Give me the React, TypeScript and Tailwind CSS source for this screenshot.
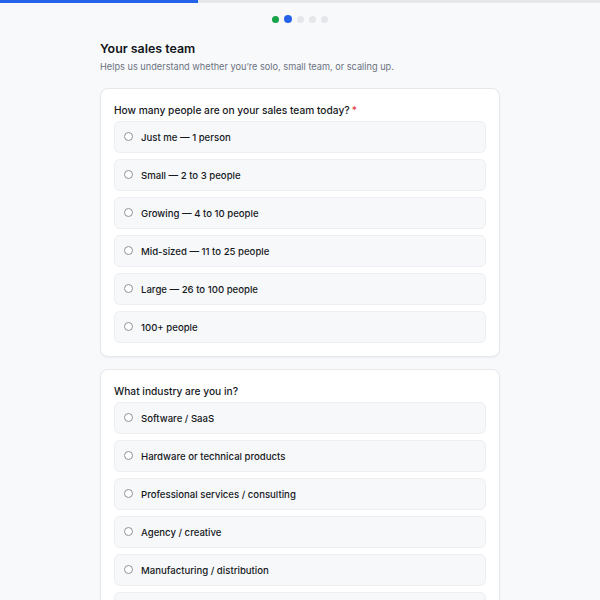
const teamSizes = [
  "Just me — 1 person",
  "Small — 2 to 3 people",
  "Growing — 4 to 10 people",
  "Mid-sized — 11 to 25 people",
  "Large — 26 to 100 people",
  "100+ people",
];

const industries = [
  "Software / SaaS",
  "Hardware or technical products",
  "Professional services / consulting",
  "Agency / creative",
  "Manufacturing / distribution",
  "Other",
];

function Option({ label }: { label: string }) {
  return (
    <label className="flex items-start gap-[8px] h-[32px] pl-[9px] pt-[10px] rounded-md border border-[#eceef1] bg-[#f7f8fa]">
      <span className="h-[9px] w-[9px] shrink-0 rounded-full border border-[#8e939b] bg-white"></span>
      <span className="text-[9.6px] leading-[12px] font-medium text-[#16191d]">{label}</span>
    </label>
  );
}

function Question({ title, required, options }: { title: string; required?: boolean; options: string[] }) {
  return (
    <div className="rounded-lg border border-[#e6e8ec] bg-white px-[13px] pt-[13px] pb-[13px] shadow-[0_1px_2px_rgba(16,24,40,0.05)]">
      <p className="text-[10.2px] leading-[16px] font-medium text-[#16191d] mb-[3px]">
        {title}
        {required && <span className="text-[#e5484d] ml-[2px]">*</span>}
      </p>
      <div className="flex flex-col gap-[6px]">
        {options.map((o) => (
          <Option key={o} label={o} />
        ))}
      </div>
    </div>
  );
}

export default function App() {
  return (
    <div className="bg-[#f8f9fb] font-['Inter',sans-serif] overflow-hidden h-[600px]">
      {/* progress */}
      <div className="h-[3px] bg-[#e5e7eb]">
        <div className="h-full w-[198px] bg-[#2563eb]"></div>
      </div>

      <div className="flex items-center justify-center gap-[5px] mt-[12px]">
        <span className="h-[7px] w-[7px] rounded-full bg-[#16a34a]"></span>
        <span className="h-[8px] w-[8px] rounded-full bg-[#2563eb]"></span>
        <span className="h-[7px] w-[7px] rounded-full bg-[#e5e7eb]"></span>
        <span className="h-[7px] w-[7px] rounded-full bg-[#e5e7eb]"></span>
        <span className="h-[7px] w-[7px] rounded-full bg-[#e5e7eb]"></span>
      </div>

      <div className="w-[400px] mx-auto mt-[17px]">
        <h1 className="text-[12.4px] leading-[18px] font-semibold text-[#111418]">Your sales team</h1>
        <p className="mt-[2px] text-[9.2px] leading-[14px] text-[#6b7280]">
          Helps us understand whether you’re solo, small team, or scaling up.
        </p>

        <div className="mt-[14px] flex flex-col gap-[12px]">
          <Question title="How many people are on your sales team today?" required options={teamSizes} />
          <Question title="What industry are you in?" options={industries} />
        </div>
      </div>
    </div>
  );
}
